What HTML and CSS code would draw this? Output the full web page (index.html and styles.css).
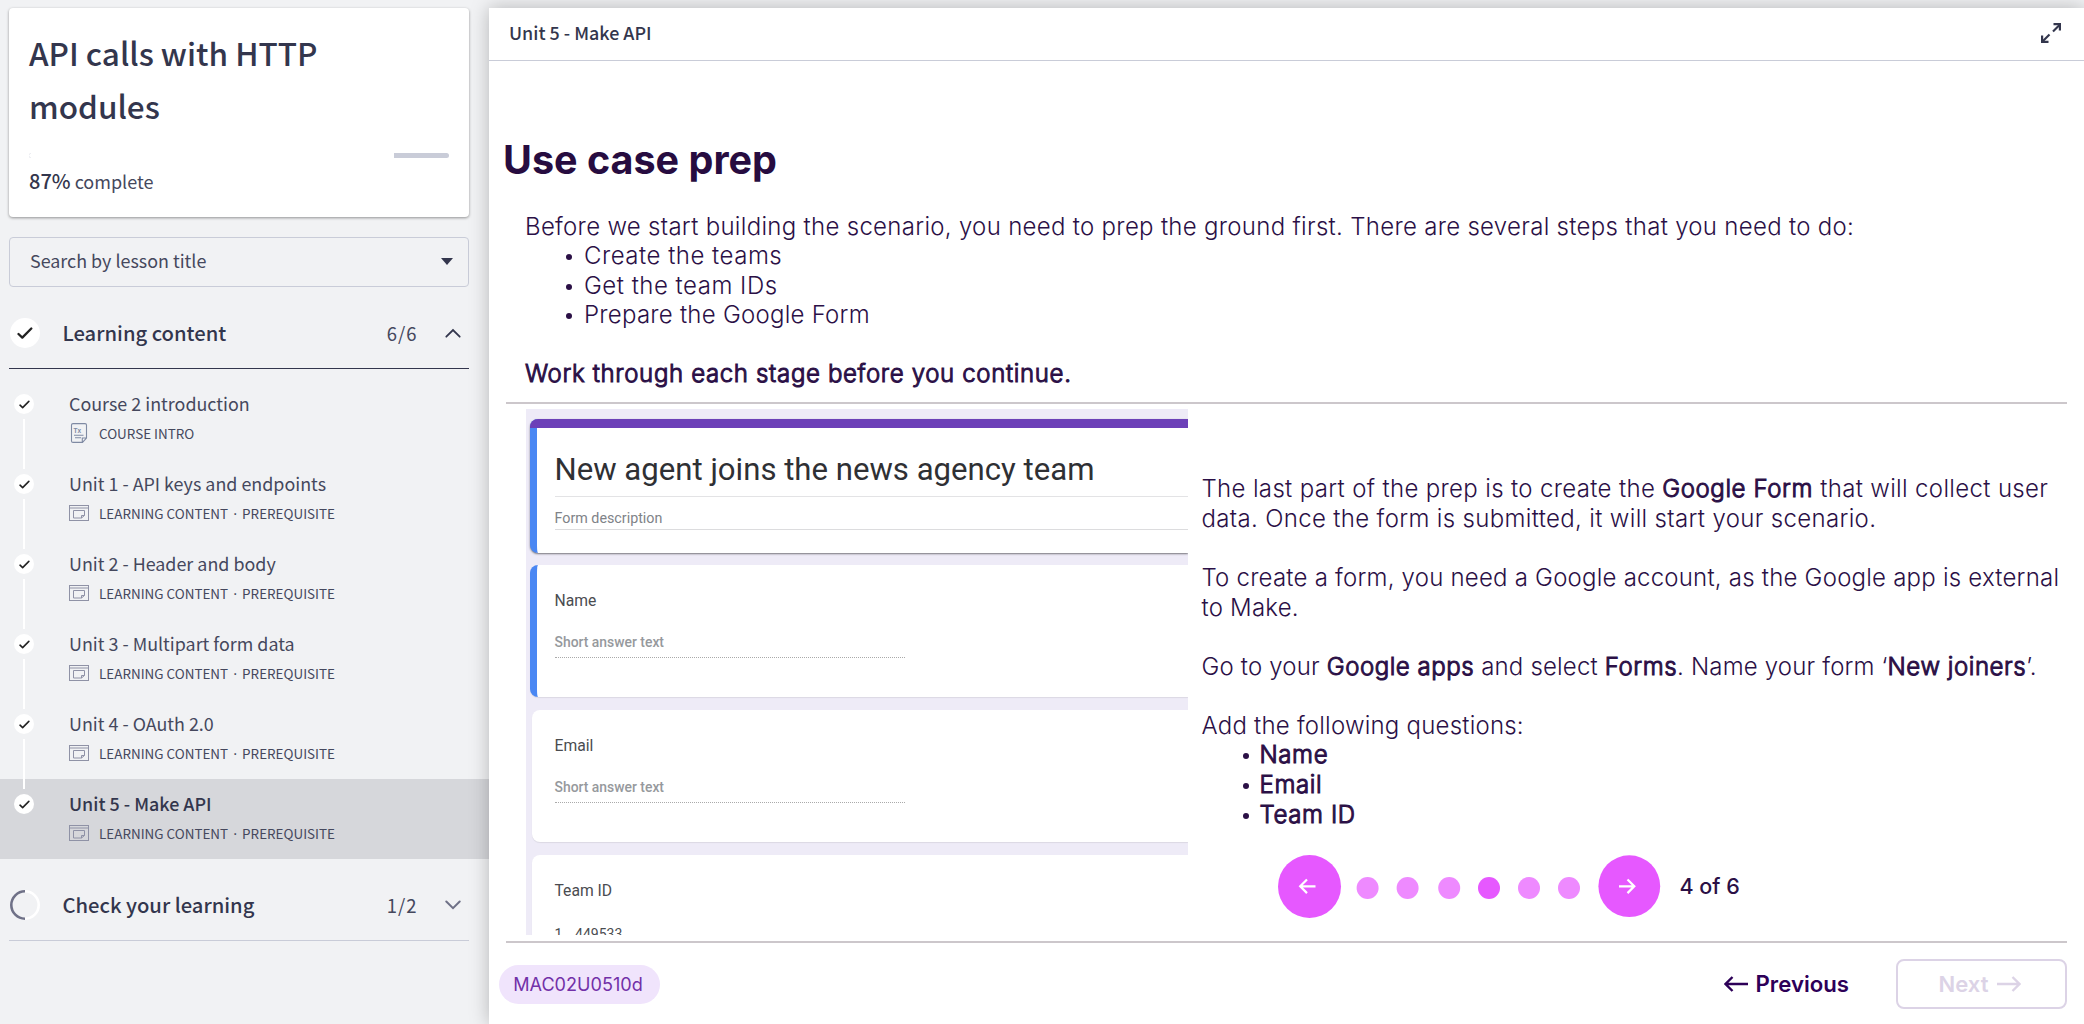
FILE: index.html
```html
<!DOCTYPE html>
<html lang="en">
<head>
<meta charset="utf-8">
<title>API calls with HTTP modules</title>
<link rel="stylesheet" href="styles.css">
</head>
<body>
<svg class="sprite" aria-hidden="true">
  <symbol id="check" viewBox="0 0 16 12"><path d="M1.5 7 L5.3 10.6 L14.3 1.5" fill="none" stroke="#222" stroke-width="2.3" stroke-linecap="round" stroke-linejoin="round"/></symbol>
  <symbol id="window" viewBox="0 0 20 20"><g fill="none" stroke="#8f92a6" stroke-width="1"><rect x="0.5" y="2.5" width="19" height="15"/><path d="M0.5 5h19M4.5 7.5h11v5l-3 2.5h-8z M12.5 15v-2.5h3"/></g></symbol>
</svg>
<div class="app">
  <aside class="sidebar">
    <section class="course-card">
      <h1 class="course-title">API calls with HTTP modules</h1>
      <div class="progress"><div class="progress-fill" style="width:87%"></div></div>
      <p class="progress-label"><b>87%</b> complete</p>
    </section>
    <div class="search"><span>Search by lesson title</span><i class="caret"></i></div>
    <div class="section-head open">
      <span class="disc"><svg width="16" height="12"><use href="#check"/></svg></span>
      <span class="section-name">Learning content</span>
      <span class="count">6/6</span>
      <svg class="chevron" width="16" height="10" viewBox="0 0 16 10"><path d="M1.3 8.7 L8 2 L14.7 8.7" fill="none" stroke="#33364d" stroke-width="1.8" stroke-linecap="round"/></svg>
    </div>
    <ol class="lessons">
      <li class="lesson"><span class="dot"><svg width="11" height="9"><use href="#check"/></svg></span><div><div class="lesson-title">Course 2 introduction</div><div class="meta"><svg width="20" height="20" viewBox="0 0 20 20"><g fill="none" stroke="#7f8aa3" stroke-width="1.1"><path d="M4 .6h12q1.5 0 1.5 1.5V15l-4 4.4H4q-1.5 0-1.5-1.5V2.1q0-1.5 1.5-1.5z M13.3 19v-4h4"/><path d="M5 12.3h9.5M6 14.7h6"/></g><text class="tx" x="4.6" y="10">Tx</text></svg><span>COURSE INTRO</span></div></div></li>
      <li class="lesson"><span class="dot"><svg width="11" height="9"><use href="#check"/></svg></span><div><div class="lesson-title">Unit 1 - API keys and endpoints</div><div class="meta"><svg width="20" height="20"><use href="#window"/></svg><span>LEARNING CONTENT</span><em>·</em><span>PREREQUISITE</span></div></div></li>
      <li class="lesson"><span class="dot"><svg width="11" height="9"><use href="#check"/></svg></span><div><div class="lesson-title">Unit 2 - Header and body</div><div class="meta"><svg width="20" height="20"><use href="#window"/></svg><span>LEARNING CONTENT</span><em>·</em><span>PREREQUISITE</span></div></div></li>
      <li class="lesson"><span class="dot"><svg width="11" height="9"><use href="#check"/></svg></span><div><div class="lesson-title">Unit 3 - Multipart form data</div><div class="meta"><svg width="20" height="20"><use href="#window"/></svg><span>LEARNING CONTENT</span><em>·</em><span>PREREQUISITE</span></div></div></li>
      <li class="lesson"><span class="dot"><svg width="11" height="9"><use href="#check"/></svg></span><div><div class="lesson-title">Unit 4 - OAuth 2.0</div><div class="meta"><svg width="20" height="20"><use href="#window"/></svg><span>LEARNING CONTENT</span><em>·</em><span>PREREQUISITE</span></div></div></li>
      <li class="lesson active"><span class="dot"><svg width="11" height="9"><use href="#check"/></svg></span><div><div class="lesson-title">Unit 5 - Make API</div><div class="meta"><svg width="20" height="20"><use href="#window"/></svg><span>LEARNING CONTENT</span><em>·</em><span>PREREQUISITE</span></div></div></li>
    </ol>
    <div class="section-head closed">
      <svg width="30" height="30" viewBox="0 0 30 30"><circle cx="15" cy="15" r="13.7" fill="none" stroke="#fff" stroke-width="2.6"/><path d="M15 1.3a13.7 13.7 0 0 0 0 27.4" fill="none" stroke="#6f7187" stroke-width="2.6"/></svg>
      <span class="section-name">Check your learning</span>
      <span class="count">1/2</span>
      <svg class="chevron" width="16" height="10" viewBox="0 0 16 10"><path d="M1.3 1.5 L8 8.2 L14.7 1.5" fill="none" stroke="#6f7187" stroke-width="2" stroke-linecap="round"/></svg>
    </div>
  </aside>
  <main class="main">
    <header class="topbar">
      <span>Unit 5 - Make API</span>
      <svg width="20" height="20" viewBox="0 0 20 20"><g fill="none" stroke="#33364d" stroke-width="2.2"><path d="M12 8.5 L18.5 2"/><path d="M12.5 1.2H18.9V7.5"/><path d="M8.5 11.5 L2 18"/><path d="M1.1 12.5V18.9H7.5"/></g></svg>
    </header>
    <div class="slide">
      <h2 class="heading">Use case prep</h2>
      <div class="intro">
        <p>Before we start building the scenario, you need to prep the ground first. There are several steps that you need to do:</p>
        <ul><li>Create the teams</li><li>Get the team IDs</li><li>Prepare the Google Form</li></ul>
        <p class="stage"><b>Work through each stage before you continue.</b></p>
      </div>
      <div class="columns">
        <div class="form">
          <div class="q title-q">
            <div class="form-title">New agent joins the news agency team</div>
            <div class="form-desc">Form description</div>
          </div>
          <div class="q selected"><div class="label">Name</div><div class="answer">Short answer text</div></div>
          <div class="q"><div class="label">Email</div><div class="answer">Short answer text</div></div>
          <div class="q"><div class="label">Team ID</div><div class="option"><span>1.</span><span>449533</span></div></div>
        </div>
        <div class="copy">
          <p>The last part of the prep is to create the <b>Google Form</b> that will collect user<br>data. Once the form is submitted, it will start your scenario.</p>
          <p class="tight">To create a form, you need a Google account, as the Google app is external<br>to Make.</p>
          <p class="tighter">Go to your <b>Google apps</b> and select <b>Forms</b>. Name your form ‘<b>New joiners</b>’.</p>
          <p class="tight">Add the following questions:</p>
          <ul><li><b>Name</b></li><li><b>Email</b></li><li><b>Team ID</b></li></ul>
          <nav class="pager">
            <svg width="390" height="64" viewBox="0 0 390 64">
              <g fill="#e658ff"><circle cx="31.5" cy="31.5" r="31.5"/><circle cx="351.3" cy="31.2" r="30.9"/><circle cx="211" cy="33" r="11"/></g>
              <g fill="#ee8aff"><circle cx="89.6" cy="33" r="11"/><circle cx="129.6" cy="33" r="11"/><circle cx="171.2" cy="33" r="11"/><circle cx="251" cy="33" r="11"/><circle cx="291" cy="33" r="11"/></g>
              <g fill="none" stroke="#fff" stroke-width="2.2"><path d="M37.5 31.3H22.5M29 24.5L22.2 31.3L29 38.1"/><path d="M341 31.3H356M349.5 24.5L356.3 31.3L349.5 38.1"/></g>
            </svg>
            <span class="page-no">4 of 6</span>
          </nav>
        </div>
      </div>
      <footer class="footer">
        <span class="code">MAC02U0510d</span>
        <span class="prev"><svg width="24" height="16" viewBox="0 0 24 16"><path d="M24 8H1.5M8.5 1L1.5 8L8.5 15" fill="none" stroke="#2d0058" stroke-width="2.4"/></svg><span>Previous</span></span>
        <span class="next"><span>Next</span><svg width="24" height="16" viewBox="0 0 24 16"><path d="M0 8H22.5M15.5 1L22.5 8L15.5 15" fill="none" stroke="#dcd3e6" stroke-width="2.4"/></svg></span>
      </footer>
    </div>
  </main>
</div>
</body>
</html>
```
FILE: styles.css
```css
* { box-sizing: border-box; margin: 0; padding: 0; }
body { background: #f1f2f4; height: 1024px; overflow: hidden; font-family: "Noto Sans CJK SC", "Open Sans", sans-serif; color: #33364d; }
ul, ol { list-style: none; }
.sprite { display: none; }
.app { display: flex; height: 1024px; }

.sidebar { width: 489px; flex: none; padding-top: 8px; }
.course-card { margin: 0 20px 0 9px; height: 209px; padding: 17.5px 20px 0; background: #fff; border-radius: 4px; box-shadow: 0 1px 3px rgba(0,0,0,.4); }
.course-title { font-size: 31.5px; line-height: 53px; font-weight: 500; width: 330px; }
.progress { height: 5px; margin-top: 21.5px; border-radius: 3px; background: #c9ccd8; overflow: hidden; }
.progress-fill { height: 5px; background: #fff; border-radius: 3px 0 0 3px; }
.progress-label { margin-top: 8.7px; font-size: 18px; line-height: 28px; color: #45485d; }
.progress-label b { font-size: 20px; line-height: 20px; font-weight: 500; color: #33364d; }
.search { margin: 20px 20px 0 9px; height: 50px; padding: 0 15px 4px 20px; border: 1px solid #c9ccd8; border-radius: 4px; display: flex; align-items: center; justify-content: space-between; font-size: 17.9px; color: #45485d; }
.caret { margin-top: 2px; border: 6px solid transparent; border-top: 7px solid #33364d; border-bottom: 0; }
.section-head { margin: 0 20px 0 9px; height: 82px; padding: 10px 0 0 1px; display: flex; align-items: center; border-bottom: 1px solid #c9ccd8; font-size: 20.2px; }
.section-head.open { border-color: #33364d; }
.disc { width: 30px; height: 30px; border-radius: 50%; background: #fff; display: grid; place-items: center; }
.section-name { margin-left: 22.5px; font-weight: 500; flex: 1; }
.count { font-size: 18.5px; letter-spacing: 1px; margin-right: 27.5px; color: #45485d; }
.chevron { margin-right: 8px; }
.lessons { padding-top: 10px; }
.lesson { position: relative; height: 80px; padding: 11px 0 0 14px; display: flex; gap: 35px; color: #45485d; }
.dot { width: 20px; height: 20px; margin-top: 4px; border-radius: 50%; background: #fff; display: grid; place-items: center; }
.lesson:not(:last-child)::after { content: ""; position: absolute; z-index: 1; left: 23px; top: 40px; width: 2px; height: 50px; background: #fff; }
.lesson-title { font-size: 17.9px; line-height: 26px; }
.active { background: #d6d7db; }
.active .lesson-title { font-weight: 500; color: #33364d; }
.meta { margin-top: 7px; display: flex; align-items: center; font-size: 13.45px; line-height: 20px; white-space: pre; }
.meta svg { margin-right: 10px; }
.meta em { font: normal 15px "Open Sans", sans-serif; width: 14px; text-align: center; }
.tx { font: bold 6.5px "Liberation Sans", sans-serif; fill: #7f8aa3; }

.main { position: relative; flex: 1; margin-top: 8px; background: #fff; box-shadow: 0 0 18px rgba(0,0,0,.25); }
.topbar { height: 53px; padding: 0 23px 4px 20px; border-bottom: 1px solid #c9ccd8; display: flex; align-items: center; justify-content: space-between; font-size: 17.9px; font-weight: 500; }
.topbar svg { margin-top: 2px; }
.slide { padding: 74px 17px 0 17px; font-family: Inter, sans-serif; color: #2b1046; font-weight: 300; font-size: 24px; line-height: 29.5px; white-space: nowrap; }
.slide b { font-weight: 300; -webkit-text-stroke: 1px #2b1046; letter-spacing: 0.6px; }
.heading { margin: 0 0 0 -3px; padding-top: 2px; height: 48px; font-size: 39.5px; line-height: 47px; font-weight: 700; letter-spacing: 0; color: #270c40; }
.intro { margin: 28.6px 0 13.4px 19px; letter-spacing: 0.3px; }
.stage { margin-top: 29.5px; }
.stage b { letter-spacing: 0.65px; }
.slide ul { padding-left: 58px; }
.intro li { padding-left: 1px; letter-spacing: 0.5px; }
.intro li:last-child { letter-spacing: 0.25px; }
.slide li { position: relative; }
.slide li::before { content: ""; position: absolute; left: -17px; top: 13px; width: 6px; height: 6px; border-radius: 50%; background: #2b1046; }
.columns { height: 541px; border: solid #ccc7cb; border-width: 2px 0; display: flex; }
.form { width: 662px; height: 526px; margin: 5px 0 0 20px; padding: 10px 0 0 4px; background: #eeebf7; overflow: hidden; font-family: Roboto, sans-serif; font-weight: 400; color: #4a4c50; }
.q { margin: 0 0 13px 2px; height: 132px; padding: 26px 0 0 22.5px; background: #fff; border-radius: 8px 0 0 8px; box-shadow: 0 1px 1px rgba(0,0,0,.08); }
.title-q, .selected { margin-left: 0; padding-left: 17.5px; border-left: 7px solid #4a87f3; }
.title-q { position: relative; height: 134px; margin-bottom: 12px; padding-top: 0; box-shadow: 0 1px 2px rgba(0,0,0,.5); }
.title-q::before { content: ""; position: absolute; left: -7px; right: 0; top: 0; height: 9.5px; border-radius: 8px 0 0 0; background: #6c40b8; }
.form-title { padding-top: 32px; height: 78px; font-size: 31.15px; line-height: 38px; color: #2f3034; border-bottom: 1px solid #e3e3e5; }
.form-desc { height: 33px; padding-top: 6px; font-size: 14.3px; line-height: 30px; color: #808388; border-bottom: 1px solid #dcdcde; }
.label { font-size: 15.7px; line-height: 20px; }
.answer { margin-top: 21px; width: 350px; height: 26px; font-size: 13.9px; line-height: 20px; font-weight: 500; color: #96999d; border-bottom: 1px dotted #aaa; }
.option { margin-top: 23px; display: flex; gap: 9px; font-size: 14px; line-height: 20px; }
.copy { margin-left: 13.5px; padding-top: 70.3px; line-height: 29.6px; letter-spacing: 0.34px; }
.copy p + p { margin-top: 29.5px; }
.copy .tight { letter-spacing: 0.22px; }
.copy .tighter { letter-spacing: 0.17px; }
.tighter b { letter-spacing: 0.55px; }
.pager { margin: 26px 0 0 76px; display: flex; align-items: flex-start; }
.page-no { margin-left: 12px; padding-top: 17px; font-size: 21.5px; font-weight: 500; letter-spacing: 0; }
.footer { display: flex; align-items: center; height: 83px; margin-left: -7px; line-height: 38px; }
.code { height: 39px; width: 161px; padding-right: 3px; text-align: center; border-radius: 20px; background: #f0e4fc; color: #7230a8; font-size: 18.1px; font-weight: 400; margin-right: auto; }
.prev { display: flex; align-items: center; gap: 8px; color: #2d0058; font-size: 22.2px; font-weight: 600; }
.next { width: 171px; height: 50px; padding-right: 3px; margin-left: 47px; display: flex; align-items: center; justify-content: center; gap: 9px; border: 2px solid #dcd3e6; border-radius: 8px; color: #dcd3e6; font-size: 22px; font-weight: 600; }
```
